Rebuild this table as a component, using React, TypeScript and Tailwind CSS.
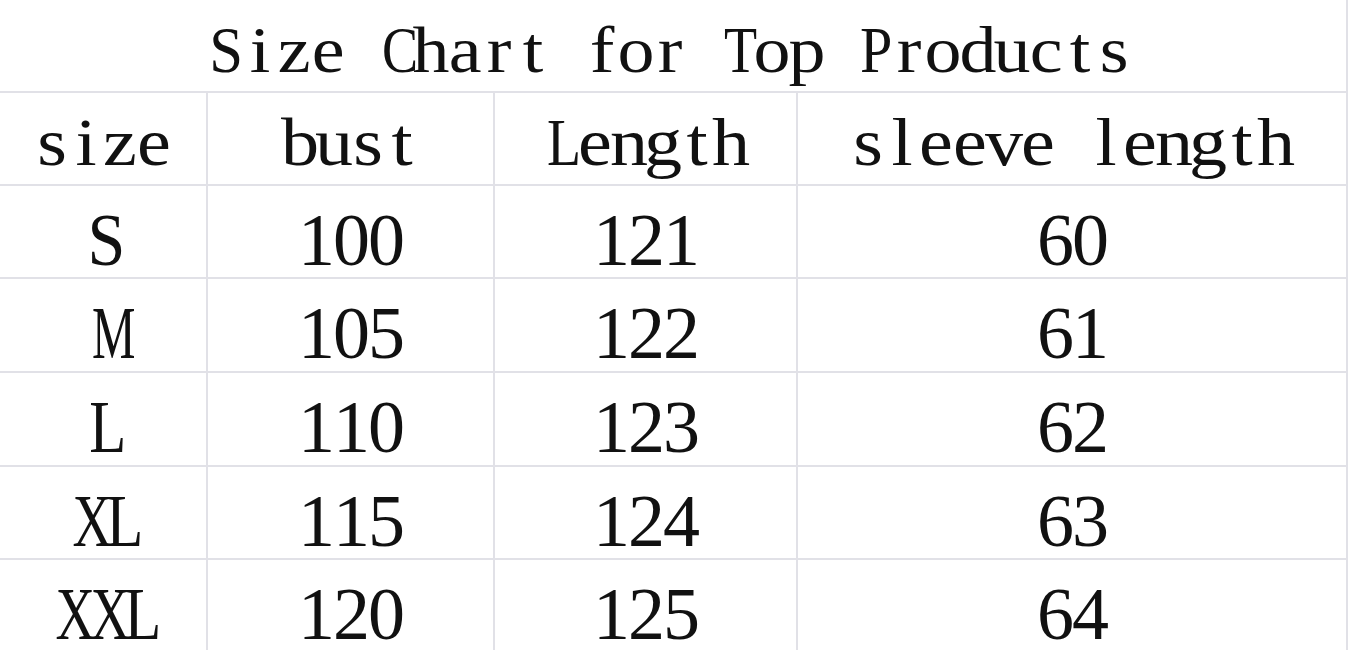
import React from "react";

// wide capitals get squeezed, lowercase widened a bit, so every glyph fills its own fixed cell
const squeeze: Record<string, string> = {
    S: "scale-x-[0.92]",
    M: "scale-x-[0.66]",
    X: "scale-x-[0.74]",
    L: "scale-x-[0.82]",
    C: "scale-x-[0.82]",
    T: "scale-x-[0.82]",
    P: "scale-x-[0.88]",
};

interface MonoProps {
    text: string;
    cell: string;
}

function glyphClass(ch: string) {
    if (squeeze[ch]) return squeeze[ch];
    if (ch >= "a" && ch <= "z") return "scale-x-[1.12]";
    return "";
}

function Mono({ text, cell }: MonoProps) {
    return (
        <span className="inline-flex">
            {text.split("").map((ch, i) => (
                <span key={i} className={`inline-block text-center ${cell} ${glyphClass(ch)}`}>
                    {ch === " " ? "\u00a0" : ch}
                </span>
            ))}
        </span>
    );
}

const rows = [
    { size: "S", bust: "100", length: "121", sleeve: "60", h: "h-[93px] border-b-2" },
    { size: "M", bust: "105", length: "122", sleeve: "61", h: "h-[94px] border-b-2" },
    { size: "L", bust: "110", length: "123", sleeve: "62", h: "h-[94px] border-b-2" },
    { size: "XL", bust: "115", length: "124", sleeve: "63", h: "h-[93px] border-b-2" },
    { size: "XXL", bust: "120", length: "125", sleeve: "64", h: "h-[93px]" },
];

const headers = ["size", "bust", "Length", "sleeve length"];

export default function App() {
    return (
        <div className="w-[1350px] h-[650px] overflow-hidden bg-white text-[#111] font-['Liberation_Serif',serif]">
            <div className="grid w-[1348px] grid-cols-[208px_287px_303px_550px] border-[#e1e1e7]">
                {/* title, spans the whole table */}
                <div className="col-span-4 h-[93px] flex justify-center items-start pt-[17px] pr-[6px] border-b-2 border-r-2 border-[#e1e1e7] text-[66px] leading-none">
                    <Mono text="Size Chart for Top Products" cell="w-[34.2px]" />
                </div>

                {headers.map((h) => (
                    <div
                        key={h}
                        className="h-[93px] flex justify-center items-start pt-[15px] border-b-2 border-r-2 border-[#e1e1e7] text-[68px] leading-none"
                    >
                        <Mono text={h} cell="w-[34px]" />
                    </div>
                ))}

                {rows.map((r) =>
                    [r.size, r.bust, r.length, r.sleeve].map((v, i) => (
                        <div
                            key={r.size + i}
                            className={`${r.h} flex justify-center items-start pt-[17px] border-r-2 border-[#e1e1e7] text-[74px] leading-none`}
                        >
                            <Mono text={v} cell="w-[35px]" />
                        </div>
                    ))
                )}
            </div>
        </div>
    );
}
